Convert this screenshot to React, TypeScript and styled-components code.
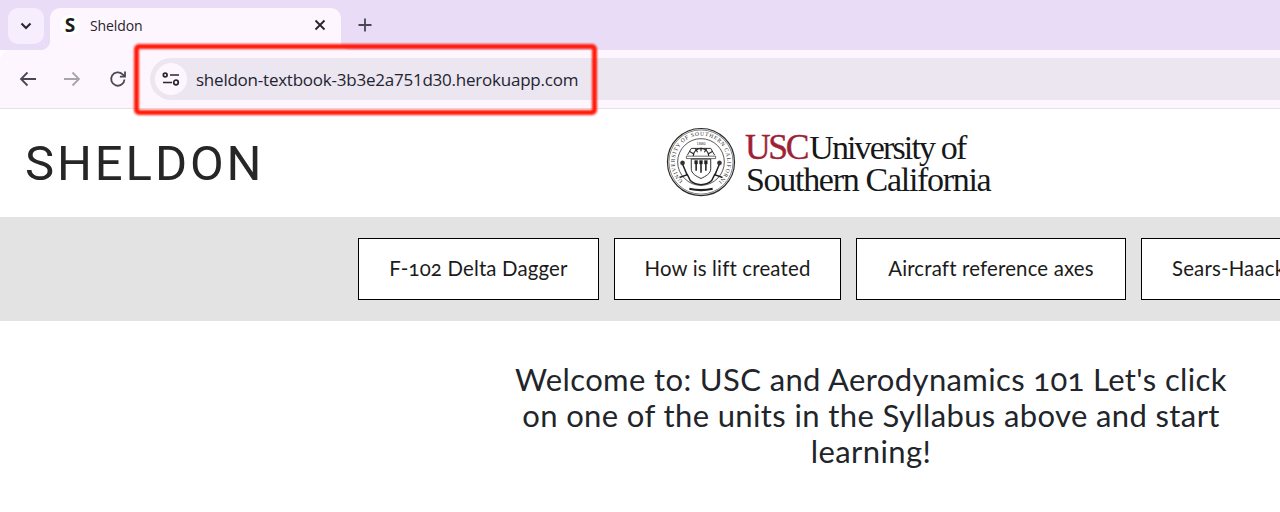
import React from "react";
import styled, { createGlobalStyle } from "styled-components";

const Global = createGlobalStyle`
  html, body { margin: 0; padding: 0; background: #fff; }
  body { width: 1280px; height: 512px; overflow: hidden; }
`;
const Page = styled.div`
  position: relative; width: 1280px; height: 512px; overflow: hidden; background: #fff;
  font-family: "Lato", "Liberation Sans", sans-serif;
`;
const TabStrip = styled.div`
  height: 50px; box-sizing: border-box; background: #e9dcf6; display: flex; align-items: flex-start;
  padding: 8px 0 0 8px;
`;
const TabSearch = styled.button`
  width: 36px; height: 36px; border: 0; padding: 0; border-radius: 10px; background: #f6edfd;
  display: flex; align-items: center; justify-content: center; color: #2a2630;
`;
const Tab = styled.div`
  position: relative; width: 291px; height: 42px; margin-left: 6px; box-sizing: border-box; background: #fdf6fe;
  border-radius: 10px 10px 0 0; display: flex; align-items: center; padding: 0 12px 8px 10px;
  &::before, &::after { content: ""; position: absolute; bottom: 0; width: 10px; height: 10px; }
  &::before { left: -10px; background: radial-gradient(circle at 0 0, transparent 10px, #fdf6fe 10.5px); }
  &::after { right: -10px; background: radial-gradient(circle at 100% 0, transparent 10px, #fdf6fe 10.5px); }
`;
const Favicon = styled.span`
  width: 20px; height: 20px; border-radius: 50%; background: #fff; display: flex; align-items: center; justify-content: center;
  font: 700 19px "Open Sans", sans-serif; color: #1c1c1c;
`;
const TabTitle = styled.span`
  margin-left: 10px; flex: 1; font: 400 14px "Open Sans", sans-serif; letter-spacing: -0.1px; color: #26232b;
`;
const TabIcon = styled.span`
  display: flex; color: #26232b; margin-right: 1px;
`;
const NewTab = styled.span`
  display: flex; margin: 9px 0 0 16px; color: #4a4654;
`;
const Toolbar = styled.div`
  height: 59px; box-sizing: border-box; background: #fdf6fe; border-bottom: 1px solid #e6e1ea;
  border-radius: 10px 0 0 0; display: flex; align-items: center; padding: 0 0 1px 16px;
`;
const NavIcon = styled.span<{ $faded?: boolean }>`
  display: flex; width: 24px; height: 24px; margin-right: 21px; color: ${(p) => (p.$faded ? "#a8a4ae" : "#4a4654")};
`;
const AddressBar = styled.div`
  flex: 1; height: 42px; margin-left: -1px; background: #ebe6f0; border-radius: 21px 0 0 21px;
  display: flex; align-items: center; padding-left: 5px; margin-right: -40px;
`;
const SiteBadge = styled.span`
  width: 32px; height: 32px; border-radius: 50%; background: #fdf6fe; display: flex; align-items: center; justify-content: center; color: #2a2630;
`;
const Url = styled.span`
  margin-left: 9px; font: 400 17px "Open Sans", sans-serif; letter-spacing: -0.23px; color: #1f2430; white-space: nowrap; padding-top: 1px;
`;
const Header = styled.header`
  height: 108px; display: flex; align-items: center; background: #fff; padding-left: 25px;
`;
const Brand = styled.div`
  width: 641px; font: 400 49px "Roboto", sans-serif; letter-spacing: 2.9px; color: #262626; line-height: 1;
`;
const Logo = styled.div`
  display: flex; align-items: center; margin-top: -3px;
`;
const LogoText = styled.div`
  margin-left: 9px; font-family: "Liberation Serif", serif; color: #16181a; font-size: 34px; line-height: 32px; white-space: nowrap; padding-top: 3px;
`;
const LogoTop = styled.div`
  letter-spacing: -1.85px;
`;
const LogoBottom = styled.div`
  letter-spacing: -1.3px; margin-left: 1px;
`;
const Usc = styled.span`
  color: #9d2235; letter-spacing: -2.3px; margin-right: 2px; font-size: 35.5px; -webkit-text-stroke: 0.4px #9d2235;
`;
const NavBar = styled.nav`
  height: 104px; box-sizing: border-box; background: #e3e3e3; display: flex; align-items: center; gap: 15px; padding-left: 358px; padding-bottom: 1px; overflow: hidden;
`;
const Unit = styled.a<{ $w: number }>`
  flex: none; width: ${(p) => p.$w}px; height: 62px; box-sizing: border-box; background: #fff; border: 1px solid #000;
  display: flex; align-items: center; justify-content: center; font-size: 20.4px; letter-spacing: 0.17px; font-variant-numeric: oldstyle-nums; color: #1b1b1b; white-space: nowrap; padding-bottom: 1px;
  overflow: hidden;
`;
const Clip = styled.span`
  display: block; width: 100%; padding-left: 30px; box-sizing: border-box;
`;
const Main = styled.main`
  display: flex; justify-content: flex-end; padding: 40px 49px 0 0;
`;
const Welcome = styled.p`
  margin: 0; width: 720px; text-align: center; font-size: 31px; line-height: 36px; letter-spacing: 0.38px; font-variant-numeric: oldstyle-nums; color: #212529;
`;
const Callout = styled.div`
  position: absolute; left: 134px; top: 44px; width: 463px; height: 71px; box-sizing: border-box;
  border: 5px solid #ff1a0a; border-radius: 5px; filter: blur(1px); pointer-events: none;
`;

const Seal = () => (
  <svg width="70" height="72" viewBox="0 0 72 72" fill="none" stroke="#2a2a2a">
    <defs>
      <path id="ring" d="M17.500 55.500A27 27 0 1 1 54.500 55.500" />
    </defs>
    <circle cx="36" cy="36" r="34.500" strokeWidth="1.200" />
    <circle cx="36" cy="36" r="33" strokeWidth="0.600" />
    <circle cx="36" cy="36" r="24" strokeWidth="0.800" />
    <text fontFamily="Liberation Serif, serif" fontSize="5.800" fill="#2a2a2a" stroke="none">
      <textPath href="#ring" textLength="134">UNIVERSITY OF SOUTHERN CALIFORNIA</textPath>
    </text>
    <text x="36" y="18" textAnchor="middle" fontFamily="Liberation Serif, serif" fontSize="4.600" fill="#2a2a2a" stroke="none">1880</text>
    <path d="M22 29L26 22 46 22 50 29" strokeWidth="1" />
    <path d="M28 30a8 8 0 0 1 16 0M36 21v4M30 22l2.500 4M42 22l-2.500 4M24 25l5 3M48 25l-5 3" strokeWidth="1.200" />
    <path d="M21 30h30v2.500H21z" fill="#fff" strokeWidth="0.700" />
    <path d="M26 33h20v10c0 5-5 7.500-10 10-5-2.500-10-5-10-10z" fill="#fff" strokeWidth="1" />
    <path d="M31 36v9M36 36v11M41 36v9" stroke="#222" strokeWidth="1.600" />
    <path d="M29.500 34.500h3v3.500h-3zM34.500 34.500h3v3.500h-3zM39.500 34.500h3v3.500h-3z" fill="#222" strokeWidth="0.400" />
    <path d="M17 38l5 12M55 38l-5 12M14 52l8-3 3 6c3 3 7 4 11 4.500 4-.5 8-1.500 11-4.500l3-6 8 3" stroke="#222" strokeWidth="1.500" />
    <circle cx="17" cy="37" r="2.200" fill="#333" strokeWidth="0.400" />
    <circle cx="55" cy="37" r="2.200" fill="#333" strokeWidth="0.400" />
    <path d="M24 63.500c8 2 16 2 24 0" stroke="#222" strokeWidth="2.200" />
  </svg>
);

export default function App() {
  return (
    <Page>
      <Global />
      <TabStrip>
        <TabSearch aria-label="Search tabs">
          <svg width="12" height="8" viewBox="0 0 12 8" fill="none" stroke="currentColor" strokeWidth="2.100"><path d="M1.500 1.500L6 6l4.500-4.500" /></svg>
        </TabSearch>
        <Tab>
          <Favicon>S</Favicon>
          <TabTitle>Sheldon</TabTitle>
          <TabIcon>
            <svg width="16" height="16" viewBox="0 0 16 16" fill="none" stroke="currentColor" strokeWidth="1.800"><path d="M3.500 3.500l9 9M12.500 3.500l-9 9" /></svg>
          </TabIcon>
        </Tab>
        <NewTab>
          <svg width="16" height="16" viewBox="0 0 16 16" fill="none" stroke="currentColor" strokeWidth="1.800"><path d="M8 1.500v13M1.500 8h13" /></svg>
        </NewTab>
      </TabStrip>
      <Toolbar>
        <NavIcon>
          <svg width="24" height="24" viewBox="0 0 24 24" fill="none" stroke="currentColor" strokeWidth="1.800"><path d="M20 12H5M11.500 5.500L5 12l6.500 6.500" /></svg>
        </NavIcon>
        <NavIcon $faded>
          <svg width="24" height="24" viewBox="0 0 24 24" fill="none" stroke="currentColor" strokeWidth="1.800"><path d="M3 12h15M11.500 5.500L18 12l-6.500 6.500" /></svg>
        </NavIcon>
        <NavIcon>
          <svg width="24" height="24" viewBox="0 0 24 24" fill="none" stroke="currentColor" strokeWidth="1.800"><path d="M18.500 12.500a6.700 6.700 0 1 1-1.900-5.200L18.500 9" /><path d="M19 4.500V9.600H13.900" /></svg>
        </NavIcon>
        <AddressBar>
          <SiteBadge>
            <svg width="18" height="14" viewBox="0 0 18 14" fill="none" stroke="currentColor" strokeWidth="1.700"><circle cx="3.200" cy="3" r="1.900" /><path d="M8 3h9M1 10.500h9" /><circle cx="14" cy="10.500" r="2.300" /></svg>
          </SiteBadge>
          <Url>sheldon-textbook-3b3e2a751d30.herokuapp.com</Url>
        </AddressBar>
      </Toolbar>
      <Header>
        <Brand>SHELDON</Brand>
        <Logo>
          <Seal />
          <LogoText>
            <LogoTop><Usc>USC</Usc>University of</LogoTop>
            <LogoBottom>Southern California</LogoBottom>
          </LogoText>
        </Logo>
      </Header>
      <NavBar>
        <Unit $w={241}>F-102 Delta Dagger</Unit>
        <Unit $w={227}>How is lift created</Unit>
        <Unit $w={270}>Aircraft reference axes</Unit>
        <Unit $w={240}><Clip>Sears-Haack body</Clip></Unit>
      </NavBar>
      <Main>
        <Welcome>Welcome to: USC and Aerodynamics 101 Let's click on one of the units in the Syllabus above and start learning!</Welcome>
      </Main>
      <Callout />
    </Page>
  );
}
